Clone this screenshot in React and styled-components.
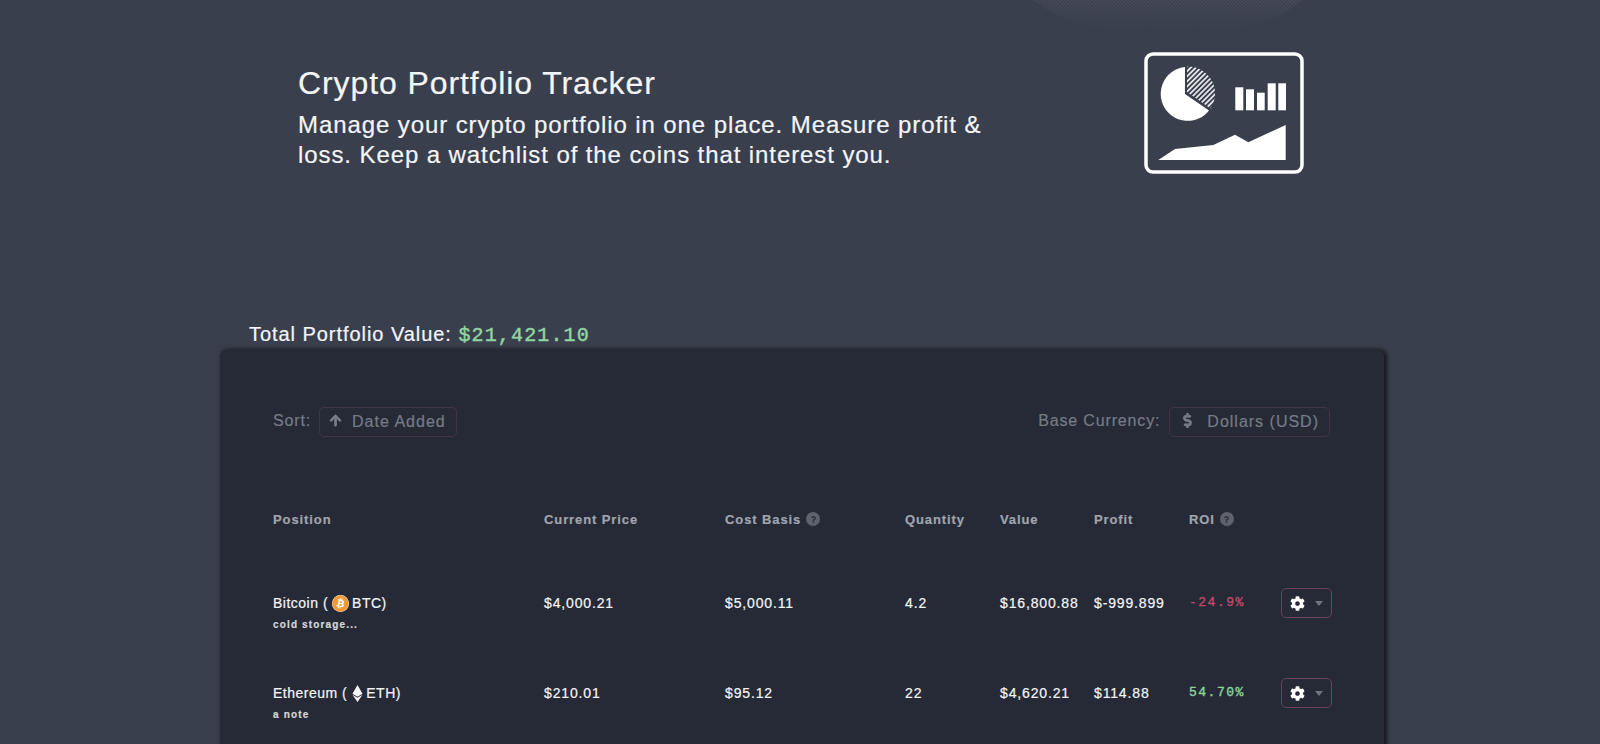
import styled, { createGlobalStyle } from "styled-components"
import { FaArrowUp, FaDollarSign, FaCog, FaEthereum, FaBitcoin, FaQuestion } from "react-icons/fa"

const positions = [
    { name: "Bitcoin", symbol: "BTC", coin: "btc", note: "cold storage...", price: "$4,000.21", cost: "$5,000.11", quantity: "4.2", value: "$16,800.88", profit: "$-999.899", roi: "-24.9%", loss: true },
    { name: "Ethereum", symbol: "ETH", coin: "eth", note: "a note", price: "$210.01", cost: "$95.12", quantity: "22", value: "$4,620.21", profit: "$114.88", roi: "54.70%", loss: false },
]

export default function App() {
    return (
        <Page>
            <GlobalStyle />
            <Waves />
            <Hero>
                <HeroText>
                    <HeroTitle>Crypto Portfolio Tracker</HeroTitle>
                    <HeroLead>Manage your crypto portfolio in one place. Measure profit &amp; loss. Keep a watchlist of the coins that interest you.</HeroLead>
                </HeroText>
                <HeroIcon />
            </Hero>
            <Total>
                Total Portfolio Value: <TotalValue>$21,421.10</TotalValue>
            </Total>
            <Card>
                <Controls>
                    <Control>
                        <ControlLabel>Sort:</ControlLabel>
                        <ControlButton $tight><FaArrowUp size={13} stroke="currentColor" strokeWidth={30} /><span>Date Added</span></ControlButton>
                    </Control>
                    <Control>
                        <ControlLabel>Base Currency:</ControlLabel>
                        <ControlButton><FaDollarSign size={15} stroke="currentColor" strokeWidth={20} /><span>Dollars (USD)</span></ControlButton>
                    </Control>
                </Controls>
                <HeaderRow>
                    <HeaderCell>Position</HeaderCell>
                    <HeaderCell>Current Price</HeaderCell>
                    <HeaderCell>Cost Basis<Help><FaQuestion size={7} /></Help></HeaderCell>
                    <HeaderCell>Quantity</HeaderCell>
                    <HeaderCell>Value</HeaderCell>
                    <HeaderCell>Profit</HeaderCell>
                    <HeaderCell>ROI<Help><FaQuestion size={7} /></Help></HeaderCell>
                </HeaderRow>
                <Rows>
                    {positions.map((p) => (
                        <Row key={p.symbol}>
                            <div>
                                <CoinName>
                                    {p.name} ({p.coin === "btc" ? <BtcBadge><FaBitcoin size={17} /></BtcBadge> : <EthBadge><FaEthereum size={17} /></EthBadge>}{p.symbol})
                                </CoinName>
                                <Note>{p.note}</Note>
                            </div>
                            <span>{p.price}</span>
                            <span>{p.cost}</span>
                            <span>{p.quantity}</span>
                            <span>{p.value}</span>
                            <span>{p.profit}</span>
                            <Roi $loss={p.loss}>{p.roi}</Roi>
                            <GearButton>
                                <FaCog size={15} />
                                <Caret />
                            </GearButton>
                        </Row>
                    ))}
                </Rows>
            </Card>
        </Page>
    )
}

function Waves() {
    return (
        <WaveSvg viewBox="0 0 270 32">
            <defs>
                <pattern id="waveHatch" width="2.4" height="2.4" patternUnits="userSpaceOnUse" patternTransform="rotate(-45)">
                    <rect width="1" height="2.4" fill="#ffffff" fillOpacity="0.09" />
                </pattern>
            </defs>
            <path d="M0 0 Q 40 32 110 32 L 170 32 Q 235 30 270 0 Z" fill="url(#waveHatch)" />
        </WaveSvg>
    )
}

function HeroIcon() {
    return (
        <IconSvg viewBox="0 0 160 122">
            <defs>
                <pattern id="hatch" width="3.6" height="3.6" patternUnits="userSpaceOnUse" patternTransform="rotate(45)">
                    <rect width="1.8" height="3.6" fill="#e4e5e8" />
                </pattern>
            </defs>
            <rect x="2" y="2" width="156" height="118" rx="7" fill="none" stroke="#ffffff" strokeWidth="3.5" />
            <path d="M41 15 A27 27 0 1 0 65 58.5 L41 42 Z" fill="#ffffff" />
            <path d="M43 14.5 A27 27 0 0 1 66.5 56.5 L43 40 Z" fill="url(#hatch)" />
            <rect x="91.3" y="35.3" width="8" height="23" fill="#ffffff" />
            <rect x="102" y="37.3" width="8" height="21" fill="#ffffff" />
            <rect x="113" y="40.7" width="7.7" height="17.6" fill="#ffffff" />
            <rect x="123.7" y="31.3" width="8" height="27" fill="#ffffff" />
            <rect x="134.3" y="31.3" width="7.7" height="27" fill="#ffffff" />
            <path d="M14.3 108 L31 97 L69.3 93 L91 82.7 L104.3 90.3 L141.7 73 L141.7 108 Z" fill="#ffffff" />
        </IconSvg>
    )
}

const GlobalStyle = createGlobalStyle`
    html, body {
        margin: 0;
        height: 100%;
        overflow: hidden;
        background: #3a3f4d;
    }
`

const Page = styled.div`
    position: relative;
    height: 744px;
    overflow: hidden;
    background: #3a3f4d;
    color: #ffffff;
    font-family: "Liberation Sans", Arial, sans-serif;
    -webkit-text-stroke: 0.2px;
`

const WaveSvg = styled.svg`
    position: absolute;
    top: 0;
    left: 1033px;
    width: 270px;
    height: 32px;
    mask-image: linear-gradient(to bottom, #000 0%, rgba(0, 0, 0, 0.55) 45%, transparent 100%);
`

const Hero = styled.div`
    display: flex;
    justify-content: space-between;
    align-items: flex-start;
    width: 1006px;
    margin-left: 298px;
    padding-top: 52px;
    height: 318px;
    box-sizing: border-box;
`

const HeroText = styled.div`
    width: 700px;
    padding-top: 14px;
`

const HeroTitle = styled.h1`
    margin: 0 0 10px;
    font-size: 32px;
    font-weight: 400;
    line-height: 34px;
    letter-spacing: 0.9px;
    color: #f4f5f7;
`

const HeroLead = styled.p`
    margin: 0;
    font-size: 24px;
    line-height: 30px;
    letter-spacing: 0.91px;
    color: #f4f5f7;
`

const IconSvg = styled.svg`
    width: 160px;
    height: 122px;
    flex-shrink: 0;
`

const Total = styled.div`
    margin-left: 249px;
    height: 32px;
    line-height: 32px;
    font-size: 20px;
    letter-spacing: 0.95px;
    color: #f4f5f7;
`

const TotalValue = styled.span`
    font-family: "Liberation Mono", monospace;
    font-size: 20px;
    letter-spacing: 1.15px;
    -webkit-text-stroke: 0.45px;
    color: #8fd6a0;
`

const Card = styled.div`
    width: 1164px;
    margin-left: 220px;
    height: 500px;
    padding: 57px 53px 0;
    box-sizing: border-box;
    background: #252a36;
    border-radius: 6px;
    box-shadow: 3px 0 4px rgba(0, 0, 0, 0.6), 0 -1px 5px rgba(0, 0, 0, 0.2);
`

const Controls = styled.div`
    display: flex;
    justify-content: space-between;
    align-items: center;
    height: 30px;
    padding-right: 1px;
`

const Control = styled.div`
    display: flex;
    align-items: center;
    gap: 9px;
    color: #767b86;
    font-size: 16px;
    letter-spacing: 1px;
`

const ControlLabel = styled.span`
    margin-top: -2px;
    letter-spacing: 0.85px;
`

const ControlButton = styled.div`
    display: flex;
    align-items: center;
    gap: ${(props) => (props.$tight ? "10px" : "12px")};
    height: 30px;
    margin-left: ${(props) => (props.$tight ? "-1px" : "0")};
    padding: 0 10px 0 ${(props) => (props.$tight ? "9px" : "10px")};
    box-sizing: border-box;
    border: 1px solid #403644;
    border-radius: 5px;
    svg {
        margin-top: -3px;
    }
`

const columns = "271px 181px 180px 95px 94px 95px 92px 1fr"

const HeaderRow = styled.div`
    display: grid;
    grid-template-columns: ${columns};
    align-items: center;
    margin-top: 71px;
    height: 22px;
`

const HeaderCell = styled.span`
    display: inline-flex;
    align-items: center;
    gap: 5px;
    font-size: 13px;
    font-weight: 700;
    letter-spacing: 0.9px;
    color: #a0a4ad;
`

const Help = styled.span`
    display: inline-flex;
    align-items: center;
    justify-content: center;
    width: 14px;
    height: 14px;
    border-radius: 50%;
    background: #5d626d;
    color: #2d323d;
`

const Rows = styled.div`
    margin-top: 64px;
`

const Row = styled.div`
    display: grid;
    grid-template-columns: ${columns};
    align-items: start;
    height: 90px;
    font-size: 14px;
    line-height: 18px;
    letter-spacing: 0.85px;
    color: #f4f5f7;
`

const CoinName = styled.div`
    display: flex;
    align-items: center;
    white-space: pre;
    letter-spacing: 0.5px;
`

const BtcBadge = styled.span`
    display: inline-flex;
    margin: 0 3px 0 4px;
    color: #f09a3a;
    background: #ffffff;
    border-radius: 50%;
`

const EthBadge = styled.span`
    display: inline-flex;
    margin: 0 0 0 2px;
    color: #f4f5f7;
`

const Note = styled.div`
    margin-top: 4px;
    font-size: 10px;
    font-weight: 700;
    letter-spacing: 1.15px;
    color: #d5d7db;
`

const Roi = styled.span`
    font-family: "Liberation Mono", monospace;
    font-size: 13px;
    letter-spacing: 1.5px;
    -webkit-text-stroke: 0.4px;
    color: ${(props) => (props.$loss ? "#b84a68" : "#8ad19a")};
`

const GearButton = styled.div`
    display: flex;
    align-items: center;
    gap: 10px;
    width: 51px;
    height: 30px;
    margin-top: -6px;
    padding-left: 8px;
    box-sizing: border-box;
    border: 1px solid #6b4259;
    border-radius: 5px;
    color: #ffffff;
`

const Caret = styled.span`
    width: 0;
    height: 0;
    border-left: 4px solid transparent;
    border-right: 4px solid transparent;
    border-top: 5px solid #6f7480;
`
